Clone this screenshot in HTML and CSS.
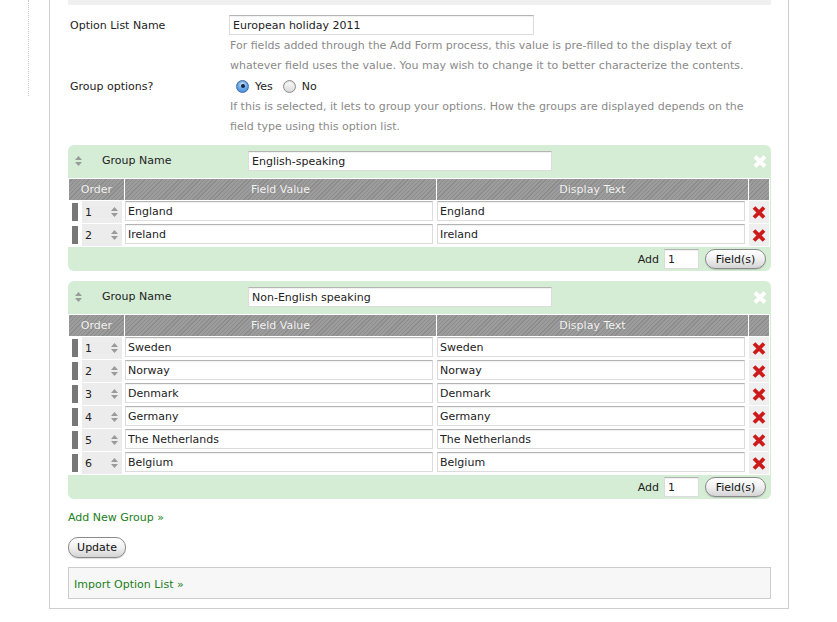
FILE: index.html
```html
<!DOCTYPE html>
<html>
<head>
<meta charset="utf-8">
<link rel="stylesheet" href="styles.css">
</head>
<body>
<div class="sidebar"></div>
<div class="panel">
  <div class="toprule"></div>
  <div class="form-row">
    <label class="label">Option List Name</label>
    <div class="value">
      <input class="text name-input" type="text" value="European holiday 2011">
      <p class="help">For fields added through the Add Form process, this value is pre-filled to the display text of whatever field uses the value. You may wish to change it to better characterize the contents.</p>
    </div>
  </div>
  <div class="form-row">
    <label class="label">Group options?</label>
    <div class="value">
      <div class="radios">
        <span class="radio checked"></span><span class="radio-label">Yes</span>
        <span class="radio"></span><span class="radio-label">No</span>
      </div>
      <p class="help">If this is selected, it lets to group your options. How the groups are displayed depends on the field type using this option list.</p>
    </div>
  </div>

  <div class="group">
    <div class="group-head">
      <svg class="arrows head-arrows" width="7" height="10" viewBox="0 0 7 10"><polygon points="0,4 3.5,0 7,4"/><polygon points="0,6 3.5,10 7,6"/></svg>
      <span class="group-label">Group Name</span>
      <input class="text group-input" type="text" value="English-speaking">
      <svg class="xicon close" width="14" height="13" viewBox="0 0 14 13"><path d="M2 1.5 L12 11.5 M12 1.5 L2 11.5"/></svg>
    </div>
    <table class="opts">
      <colgroup><col class="c1"><col class="c2"><col class="c3"><col class="c4"></colgroup>
      <thead><tr><th>Order</th><th>Field Value</th><th>Display Text</th><th></th></tr></thead>
      <tbody>
        <tr><td class="ord"><div class="ordwrap"><span class="handle"></span><span class="num"><span>1</span><svg class="arrows" width="7" height="10" viewBox="0 0 7 10"><polygon points="0,4 3.5,0 7,4"/><polygon points="0,6 3.5,10 7,6"/></svg></span></div></td><td><input class="text cell-input" value="England"></td><td><input class="text cell-input" value="England"></td><td class="del"><svg class="xicon red" width="14" height="13" viewBox="0 0 14 13"><path d="M2 1.5 L12 11.5 M12 1.5 L2 11.5"/></svg></td></tr>
        <tr><td class="ord"><div class="ordwrap"><span class="handle"></span><span class="num"><span>2</span><svg class="arrows" width="7" height="10" viewBox="0 0 7 10"><polygon points="0,4 3.5,0 7,4"/><polygon points="0,6 3.5,10 7,6"/></svg></span></div></td><td><input class="text cell-input" value="Ireland"></td><td><input class="text cell-input" value="Ireland"></td><td class="del"><svg class="xicon red" width="14" height="13" viewBox="0 0 14 13"><path d="M2 1.5 L12 11.5 M12 1.5 L2 11.5"/></svg></td></tr>
      </tbody>
    </table>
    <div class="group-foot">
      <span>Add</span><input class="text add-input" value="1"><button class="btn">Field(s)</button>
    </div>
  </div>

  <div class="group">
    <div class="group-head">
      <svg class="arrows head-arrows" width="7" height="10" viewBox="0 0 7 10"><polygon points="0,4 3.5,0 7,4"/><polygon points="0,6 3.5,10 7,6"/></svg>
      <span class="group-label">Group Name</span>
      <input class="text group-input" type="text" value="Non-English speaking">
      <svg class="xicon close" width="14" height="13" viewBox="0 0 14 13"><path d="M2 1.5 L12 11.5 M12 1.5 L2 11.5"/></svg>
    </div>
    <table class="opts">
      <colgroup><col class="c1"><col class="c2"><col class="c3"><col class="c4"></colgroup>
      <thead><tr><th>Order</th><th>Field Value</th><th>Display Text</th><th></th></tr></thead>
      <tbody>
        <tr><td class="ord"><div class="ordwrap"><span class="handle"></span><span class="num"><span>1</span><svg class="arrows" width="7" height="10" viewBox="0 0 7 10"><polygon points="0,4 3.5,0 7,4"/><polygon points="0,6 3.5,10 7,6"/></svg></span></div></td><td><input class="text cell-input" value="Sweden"></td><td><input class="text cell-input" value="Sweden"></td><td class="del"><svg class="xicon red" width="14" height="13" viewBox="0 0 14 13"><path d="M2 1.5 L12 11.5 M12 1.5 L2 11.5"/></svg></td></tr>
        <tr><td class="ord"><div class="ordwrap"><span class="handle"></span><span class="num"><span>2</span><svg class="arrows" width="7" height="10" viewBox="0 0 7 10"><polygon points="0,4 3.5,0 7,4"/><polygon points="0,6 3.5,10 7,6"/></svg></span></div></td><td><input class="text cell-input" value="Norway"></td><td><input class="text cell-input" value="Norway"></td><td class="del"><svg class="xicon red" width="14" height="13" viewBox="0 0 14 13"><path d="M2 1.5 L12 11.5 M12 1.5 L2 11.5"/></svg></td></tr>
        <tr><td class="ord"><div class="ordwrap"><span class="handle"></span><span class="num"><span>3</span><svg class="arrows" width="7" height="10" viewBox="0 0 7 10"><polygon points="0,4 3.5,0 7,4"/><polygon points="0,6 3.5,10 7,6"/></svg></span></div></td><td><input class="text cell-input" value="Denmark"></td><td><input class="text cell-input" value="Denmark"></td><td class="del"><svg class="xicon red" width="14" height="13" viewBox="0 0 14 13"><path d="M2 1.5 L12 11.5 M12 1.5 L2 11.5"/></svg></td></tr>
        <tr><td class="ord"><div class="ordwrap"><span class="handle"></span><span class="num"><span>4</span><svg class="arrows" width="7" height="10" viewBox="0 0 7 10"><polygon points="0,4 3.5,0 7,4"/><polygon points="0,6 3.5,10 7,6"/></svg></span></div></td><td><input class="text cell-input" value="Germany"></td><td><input class="text cell-input" value="Germany"></td><td class="del"><svg class="xicon red" width="14" height="13" viewBox="0 0 14 13"><path d="M2 1.5 L12 11.5 M12 1.5 L2 11.5"/></svg></td></tr>
        <tr><td class="ord"><div class="ordwrap"><span class="handle"></span><span class="num"><span>5</span><svg class="arrows" width="7" height="10" viewBox="0 0 7 10"><polygon points="0,4 3.5,0 7,4"/><polygon points="0,6 3.5,10 7,6"/></svg></span></div></td><td><input class="text cell-input" value="The Netherlands"></td><td><input class="text cell-input" value="The Netherlands"></td><td class="del"><svg class="xicon red" width="14" height="13" viewBox="0 0 14 13"><path d="M2 1.5 L12 11.5 M12 1.5 L2 11.5"/></svg></td></tr>
        <tr><td class="ord"><div class="ordwrap"><span class="handle"></span><span class="num"><span>6</span><svg class="arrows" width="7" height="10" viewBox="0 0 7 10"><polygon points="0,4 3.5,0 7,4"/><polygon points="0,6 3.5,10 7,6"/></svg></span></div></td><td><input class="text cell-input" value="Belgium"></td><td><input class="text cell-input" value="Belgium"></td><td class="del"><svg class="xicon red" width="14" height="13" viewBox="0 0 14 13"><path d="M2 1.5 L12 11.5 M12 1.5 L2 11.5"/></svg></td></tr>
      </tbody>
    </table>
    <div class="group-foot">
      <span>Add</span><input class="text add-input" value="1"><button class="btn">Field(s)</button>
    </div>
  </div>

  <a class="link add-group" href="#">Add New Group »</a>
  <div class="update-row"><button class="btn update">Update</button></div>
  <div class="import-box"><a class="link" href="#">Import Option List »</a></div>
</div>
</body>
</html>
```

FILE: styles.css
```css
* { box-sizing: border-box; }
html, body { margin: 0; padding: 0; background: #fff; }
body {
  display: flex;
  align-items: flex-start;
  font-family: "DejaVu Sans", Verdana, sans-serif;
  font-size: 11px;
  color: #222;
}
.sidebar {
  width: 29px;
  height: 96px;
  border-right: 1px dotted #c8c8c8;
}
.panel {
  margin-left: 20px;
  width: 740px;
  border: 1px solid #cfcfcf;
  border-top: none;
  padding: 0 17px 9px 18px;
}
.toprule { height: 5px; background: #f0f0f0; }

.form-row {
  display: grid;
  grid-template-columns: 161px 1fr;
}
.toprule + .form-row { margin-top: 10px; }
.label { padding: 1px 0 0 2px; line-height: 20px; color: #222; }
.help { margin: 1px 0 0 1px; width: 520px; line-height: 20px; color: #8a8a8a; }

input.text {
  font-family: "DejaVu Sans", Verdana, sans-serif;
  font-size: 11px;
  color: #222;
  height: 20px;
  border: 1px solid #dcdcdc;
  border-top-color: #b4b4b4;
  background: #fff;
  padding: 0 0 0 3px;
  margin: 0;
  outline: none;
  box-shadow: inset 0 1px 1px rgba(0,0,0,0.06);
}
.name-input { width: 305px; display: block; }

.radios { display: flex; align-items: center; height: 20px; padding-left: 7px; }
.radio {
  width: 13px; height: 13px; border-radius: 50%;
  border: 1px solid #8d8d8d;
  background: linear-gradient(#ffffff, #d8d8d8);
  box-shadow: inset 0 1px 1px rgba(0,0,0,0.15);
  position: relative;
}
.radio.checked {
  border-color: #3c6fb0;
  background: radial-gradient(circle at 50% 30%, #cfe6fb 0, #72aee8 45%, #2f7fd4 100%);
}
.radio.checked::after {
  content: "";
  position: absolute; left: 3.5px; top: 3.5px;
  width: 4px; height: 4px; border-radius: 50%;
  background: #0f2540;
}
.radio-label { margin-left: 6px; margin-right: 10px; }

.group {
  margin-top: 8px;
  background: #d5ecd5;
  border-radius: 6px;
}
.group + .group { margin-top: 10px; }
.group-head {
  height: 33px;
  display: flex;
  align-items: flex-start;
  padding-top: 6px;
  position: relative;
}
.arrows { fill: #9a9a9a; display: block; }
.head-arrows { margin: 5px 0 0 7px; }
.group-label { margin-left: 20px; line-height: 20px; }
.group-input { position: absolute; left: 180px; top: 6px; width: 304px; border-color: #e4efe4; border-top-color: #c9d6c9; }
.xicon path { stroke-width: 3.8; fill: none; stroke-linecap: butt; }
.close { position: absolute; right: 4px; top: 10px; }
.close path { stroke: #fff; stroke-width: 4; }
.red path { stroke: #cc1a1a; }

table.opts {
  width: 702px;
  table-layout: fixed;
  border-collapse: separate;
  border-spacing: 1px;
  background: #fff;
}
col.c1 { width: 55px; }
col.c2 { width: 311px; }
col.c3 { width: 311px; }
col.c4 { width: 20px; }
.opts th {
  height: 21px;
  padding: 0;
  font-weight: normal;
  color: #f4f4f4;
  background: repeating-linear-gradient(135deg, #9c9c9c 0 2px, #8c8c8c 2px 3px);
  text-align: center;
  text-shadow: 0 0 1px rgba(0,0,0,0.15);
}
.opts td {
  height: 22px;
  padding: 0;
  vertical-align: top;
  background: #fff;
}
.cell-input { width: calc(100% - 3px); height: 21px; display: block; padding-left: 2px !important; }
.opts td.del { background: #efefef; vertical-align: middle; text-align: center; }
.del svg { display: block; margin: 1px auto 0; }
.ordwrap { display: flex; height: 22px; align-items: center; }
.handle { width: 6px; height: 18px; background: #777; margin-left: 3px; }
.num {
  margin-left: 4px;
  width: 40px; height: 22px;
  background: #ececec;
  display: flex; align-items: center; justify-content: space-between;
  padding: 0 4px 0 3px;
}

.group-foot {
  height: 24px;
  display: flex;
  align-items: center;
  justify-content: flex-end;
  padding-right: 5px;
}
.add-input { width: 35px; margin-left: 5px !important; border: 1px solid #fff; }
.btn {
  font-family: "DejaVu Sans", Verdana, sans-serif;
  font-size: 11px;
  color: #111;
  height: 20px;
  border: 1px solid #8a8a8a;
  border-radius: 10px;
  background: linear-gradient(#ffffff 0%, #f0f0f0 50%, #d4d4d4 100%);
  box-shadow: 0 1px 1px rgba(0,0,0,0.15);
  padding: 0 9px;
  margin: 0;
}
.group-foot .btn { margin-left: 6px; width: 61px; }

.link { color: #208020; text-decoration: none; }
.add-group { display: block; margin-top: 9px; line-height: 20px; }
.update-row { margin-top: 9px; }
.update { height: 21px; width: 58px; padding: 0; }
.import-box {
  margin-top: 9px;
  height: 32px;
  border: 1px solid #cccccc;
  background: #f7f7f7;
  display: flex;
  align-items: center;
  padding: 2px 0 0 5px;
}
```
